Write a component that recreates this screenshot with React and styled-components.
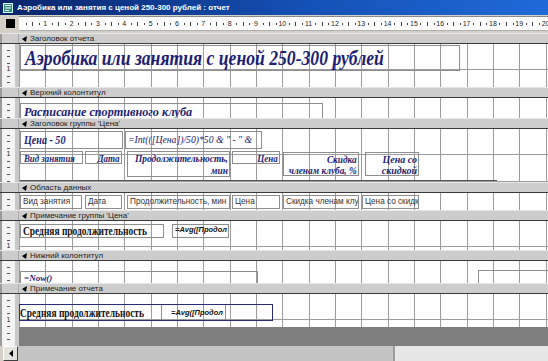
import React from "react";
import styled, { createGlobalStyle, css } from "styled-components";

const CM = 26.33;

const GlobalStyle = createGlobalStyle`
  html, body { margin: 0; padding: 0; }
  body {
    width: 548px;
    height: 361px;
    overflow: hidden;
    background: #d4d0c8;
    font-family: "Liberation Sans", Arial, sans-serif;
  }
`;

const Window = styled.div`
  width: 548px;
  height: 361px;
  display: flex;
  flex-direction: column;
  overflow: hidden;
  background: #d4d0c8;
`;

const TitleBar = styled.div`
  height: 15px;
  flex: none;
  display: flex;
  align-items: center;
  gap: 4px;
  padding-left: 3px;
  background: linear-gradient(to right, #0a246a, #1450b4 55%, #1f6ad8);
  color: #fff;
  font: bold 8px "Liberation Sans", Arial, sans-serif;
  white-space: nowrap;
`;

const RulerRow = styled.div`
  display: flex;
  height: 15px;
  flex: none;
  margin-top: 1px;
`;

const RulerCorner = styled.div`
  width: 19px;
  display: flex;
  align-items: center;
  justify-content: center;
`;

const Selector = styled.div`
  width: 9px;
  height: 9px;
  background: #000;
  margin-left: 2px;
`;

const RulerStrip = styled.div`
  flex: 1;
  display: flex;
  overflow: hidden;
  background: #fff;
  border-top: 1px solid #8a8a8a;
  border-bottom: 1px solid #b0b0b0;
  padding-left: ${CM / 2}px;
  background-image: linear-gradient(#444, #444);
  background-size: 1px 2px;
  background-position: ${CM / 4}px 50%;
  background-repeat: no-repeat;
`;

const RulerCell = styled.div`
  flex: none;
  width: ${CM}px;
  display: flex;
  align-items: center;
  justify-content: center;
  font: 7px "Liberation Sans", Arial, sans-serif;
  color: #222;
  background-image: linear-gradient(#444, #444), linear-gradient(#444, #444),
    linear-gradient(#444, #444);
  background-size: 1px 4px, 1px 2px, 1px 2px;
  background-position: 0 50%, ${CM / 4}px 50%, ${(CM * 3) / 4}px 50%;
  background-repeat: no-repeat;
`;

const Spacer = styled.div`
  height: 2px;
  flex: none;
`;

const Row = styled.div`
  display: flex;
  flex: none;
`;

const LeftRuler = styled.div`
  width: 19px;
  flex: none;
  box-sizing: border-box;
  border-left: 2px solid #9a9a9a;
  border-right: 4px solid #c8c8c8;
  background-color: #f4f4f4;
  background-image: repeating-linear-gradient(
    to bottom,
    transparent 0,
    transparent ${CM / 4 - 1}px,
    #555 ${CM / 4 - 1}px,
    #555 ${CM / 4}px
  );
  background-size: 3px 100%;
  background-position: 5px 0;
  background-repeat: no-repeat;
  display: flex;
  flex-direction: column;
  align-items: center;
  font: 7px "Liberation Sans", Arial, sans-serif;
  color: #222;
`;

const RulerMark = styled.span`
  margin-top: ${CM - 5}px;
  background: #f4f4f4;
  line-height: 8px;
`;

const BandRow = styled.div`
  display: flex;
  flex: none;
  height: 11px;
  box-sizing: border-box;
  background: #cdcdcd;
  border-top: 1px solid #e6e6e6;
  border-bottom: 1px solid #3a3a3a;
`;

const BandGutter = styled.div`
  width: 19px;
  flex: none;
  box-sizing: border-box;
  border-left: 2px solid #9a9a9a;
  border-right: 1px solid #a8a8a8;
`;

const BandLabel = styled.div`
  display: flex;
  align-items: center;
  gap: 3px;
  padding-left: 3px;
  font: 8px "Liberation Sans", Arial, sans-serif;
  color: #222;
  white-space: nowrap;
`;

const Canvas = styled.div`
  position: relative;
  flex: 1;
  height: ${(p) => p.$h}px;
  overflow: hidden;
  background-color: ${(p) => (p.$dark ? "#7e7e7e" : "#fff")};
  background-image: ${(p) =>
    p.$dark
      ? "none"
      : `repeating-linear-gradient(to right, #9c9c9c 0, #9c9c9c 1px, transparent 1px, transparent ${CM}px),
         repeating-linear-gradient(to bottom, transparent 0, transparent ${CM - 1}px, #9c9c9c ${CM - 1}px, #9c9c9c ${CM}px)`};
`;

const placed = css`
  position: absolute;
  left: ${(p) => p.$x}px;
  top: ${(p) => p.$y}px;
  width: ${(p) => p.$w}px;
  height: ${(p) => p.$h}px;
  box-sizing: border-box;
  border: 1px solid #8e8e8e;
  overflow: hidden;
  white-space: nowrap;
`;

const serifNavy = css`
  font-family: "Liberation Serif", "Times New Roman", serif;
  font-style: italic;
  font-weight: bold;
  color: #1d1d72;
`;

/* serif captions in the design view are narrower than Liberation Serif */
const Squeeze = styled.span`
  display: inline-block;
  white-space: pre;
  transform: scaleX(${(p) => p.$sx || 0.9});
  transform-origin: ${(p) => (p.$right ? "right" : "left")} center;
`;

const TitleLabel = styled.div`
  ${placed}
  ${serifNavy}
  font-size: 21px;
  line-height: 24px;
  padding-left: 4px;
`;

const HeaderLabel = styled.div`
  ${placed}
  ${serifNavy}
  font-size: ${(p) => p.$size || 10}px;
  line-height: ${(p) => p.$lh || 11}px;
  padding: ${(p) => (p.$right ? "1px 1px 0 0" : "1px 0 0 3px")};
  text-align: ${(p) => (p.$right ? "right" : "left")};
`;

const Formula = styled.div`
  ${placed}
  font-family: "Liberation Serif", "Times New Roman", serif;
  font-style: italic;
  font-size: 11px;
  line-height: 15px;
  color: #1d1d72;
  padding-left: 2px;
`;

const FieldBox = styled.div`
  ${placed}
  font: 8.2px "Liberation Sans", Arial, sans-serif;
  line-height: 12px;
  color: #333;
  padding-left: 2px;
`;

const SummaryLabel = styled.div`
  ${placed}
  font: bold 11.5px "Liberation Serif", "Times New Roman", serif;
  line-height: 12px;
  color: #111;
  padding-left: 2px;
`;

const AvgBox = styled.div`
  ${placed}
  font: italic bold 7.5px "Liberation Sans", Arial, sans-serif;
  line-height: 10px;
  color: #111;
  padding-left: 2px;
`;

const FooterFrame = styled.div`
  ${placed}
  border: 1.5px solid #2b2b7e;
  display: flex;
  align-items: stretch;
`;

const FrameLabel = styled.div`
  width: 141px;
  flex: none;
  display: flex;
  align-items: center;
  font: bold 11.5px "Liberation Serif", "Times New Roman", serif;
  color: #111;
  white-space: nowrap;
  overflow: hidden;
`;

const FrameAvg = styled.div`
  width: 65px;
  flex: none;
  box-sizing: border-box;
  border-left: 1px solid #8e8e8e;
  border-right: 1px solid #8e8e8e;
  display: flex;
  align-items: center;
  padding-left: 9px;
  font: italic bold 7.5px "Liberation Sans", Arial, sans-serif;
  color: #111;
  white-space: nowrap;
  overflow: hidden;
`;

const LineControl = styled.div`
  position: absolute;
  left: ${(p) => p.$x}px;
  top: ${(p) => p.$y}px;
  width: ${(p) => p.$w}px;
  height: 1px;
  background: #555;
`;

const ScrollBar = styled.div`
  flex: none;
  height: 15px;
  display: flex;
  align-items: stretch;
  padding-left: 3px;
  background: #d4d0c8;
`;

const ScrollButton = styled.div`
  width: 15px;
  box-sizing: border-box;
  border: 1px solid;
  border-color: #fff #404040 #404040 #fff;
  background: #e4e2dc;
  display: flex;
  align-items: center;
  justify-content: center;
`;

const ScrollThumb = styled.div`
  width: 377px;
  box-sizing: border-box;
  background: #c4c4c4;
  border-right: 2px solid #9a9a9a;
`;

const ScrollTrack = styled.div`
  flex: 1;
  background: #e6e6e6;
`;

function Arrow() {
  return (
    <svg width="5" height="6" viewBox="0 0 5 6">
      <polygon points="0,3 5,0 4,6" fill="#000" />
    </svg>
  );
}

function Band({ children }) {
  return (
    <BandRow>
      <BandGutter />
      <BandLabel>
        <Arrow />
        {children}
      </BandLabel>
    </BandRow>
  );
}

function Section({ h, mark, dark, children }) {
  return (
    <Row>
      <LeftRuler>{mark && <RulerMark>1</RulerMark>}</LeftRuler>
      <Canvas $h={h} $dark={dark}>
        {children}
      </Canvas>
    </Row>
  );
}

function ReportIcon() {
  return (
    <svg width="10" height="10" viewBox="0 0 10 10">
      <rect x="0.5" y="0.5" width="9" height="9" fill="#2f8f7a" stroke="#cfe" />
      <rect x="2" y="2" width="6" height="1" fill="#fff" />
      <rect x="2" y="4.5" width="6" height="1" fill="#fff" />
      <rect x="2" y="7" width="4" height="1" fill="#fff" />
    </svg>
  );
}

const rulerNumbers = Array.from({ length: 20 }, (_, i) => i + 1);

export default function App() {
  return (
    <Window>
      <GlobalStyle />
      <TitleBar>
        <ReportIcon />
        Аэробика или занятия с ценой 250-300 рублей : отчет
      </TitleBar>

      <RulerRow>
        <RulerCorner>
          <Selector />
        </RulerCorner>
        <RulerStrip>
          {rulerNumbers.map((n) => (
            <RulerCell key={n}>{n}</RulerCell>
          ))}
        </RulerStrip>
      </RulerRow>
      <Spacer />

      <Band>Заголовок отчета</Band>
      <Section h={43} mark>
        <TitleLabel $x={1} $y={1} $w={440} $h={26}>
          <Squeeze $sx={0.84}>Аэробика или занятия с ценой 250-300 рублей</Squeeze>
        </TitleLabel>
      </Section>

      <Band>Верхний колонтитул</Band>
      <Section h={20}>
        <HeaderLabel $x={1} $y={5} $w={303} $h={16} $size={13} $lh={13}>
          <Squeeze $sx={0.94}>Расписание спортивного клуба</Squeeze>
        </HeaderLabel>
      </Section>

      <Band>Заголовок группы 'Цена'</Band>
      <Section h={53} mark>
        <HeaderLabel $x={1} $y={2} $w={103} $h={18} $size={12} $lh={15}>
          <Squeeze $sx={0.84}>Цена - 50</Squeeze>
        </HeaderLabel>
        <Formula $x={106} $y={2} $w={137} $h={18}>
          <Squeeze $sx={0.88}>=Int(([Цена])/50)*50 &amp; " - " &amp;</Squeeze>
        </Formula>
        <HeaderLabel $x={1} $y={22} $w={63} $h={13}>
          <Squeeze $sx={0.88}>Вид занятия</Squeeze>
        </HeaderLabel>
        <HeaderLabel $x={66} $y={22} $w={37} $h={13} $right>
          <Squeeze $right>Дата</Squeeze>
        </HeaderLabel>
        <HeaderLabel $x={108} $y={22} $w={103} $h={26} $right $lh={12}>
          <Squeeze $right $sx={0.94}>{"Продолжительность,\nмин"}</Squeeze>
        </HeaderLabel>
        <HeaderLabel $x={213} $y={22} $w={48} $h={13} $right>
          <Squeeze $right>Цена</Squeeze>
        </HeaderLabel>
        <HeaderLabel $x={264} $y={23} $w={76} $h={24} $right $lh={11}>
          <Squeeze $right $sx={0.93}>{"Скидка\nчленам клуба, %"}</Squeeze>
        </HeaderLabel>
        <HeaderLabel $x={346} $y={23} $w={54} $h={24} $right $lh={11}>
          <Squeeze $right $sx={1}>{"Цена со\nскидкой"}</Squeeze>
        </HeaderLabel>
        <LineControl $x={1} $y={51} $w={477} />
      </Section>

      <Band>Область данных</Band>
      <Section h={17}>
        <FieldBox $x={1} $y={2} $w={62} $h={14}>Вид занятия</FieldBox>
        <FieldBox $x={66} $y={2} $w={37} $h={14}>Дата</FieldBox>
        <FieldBox $x={108} $y={2} $w={103} $h={14}>Продолжительность, мин</FieldBox>
        <FieldBox $x={213} $y={2} $w={48} $h={14}>Цена</FieldBox>
        <FieldBox $x={264} $y={2} $w={76} $h={14}>Скидка членам клуб</FieldBox>
        <FieldBox $x={343} $y={2} $w={57} $h={14}>Цена со скидкс</FieldBox>
      </Section>

      <Band>Примечание группы 'Цена'</Band>
      <Section h={29} mark>
        <SummaryLabel $x={1} $y={3} $w={144} $h={14}>
          <Squeeze $sx={0.82}>Средняя продолжительность</Squeeze>
        </SummaryLabel>
        <AvgBox $x={153} $y={3} $w={57} $h={14}>
          =Avg([Продол
        </AvgBox>
      </Section>

      <Band>Нижний колонтитул</Band>
      <Section h={22}>
        <HeaderLabel $x={1} $y={10} $w={238} $h={16} $size={9} $lh={11}>
          =Now()
        </HeaderLabel>
        <FieldBox $x={459} $y={9} $w={100} $h={20} />
      </Section>

      <Band>Примечание отчета</Band>
      <Section h={33} mark>
        <FooterFrame $x={0} $y={10} $w={254} $h={17}>
          <FrameLabel>
            <Squeeze $sx={0.82}>Средняя продолжительность</Squeeze>
          </FrameLabel>
          <FrameAvg>=Avg([Продол</FrameAvg>
        </FooterFrame>
      </Section>
      <Section h={19} dark />

      <ScrollBar>
        <ScrollButton>
          <svg width="4" height="7" viewBox="0 0 4 7">
            <polygon points="4,0 0,3.5 4,7" fill="#000" />
          </svg>
        </ScrollButton>
        <ScrollThumb />
        <ScrollTrack />
      </ScrollBar>
    </Window>
  );
}
